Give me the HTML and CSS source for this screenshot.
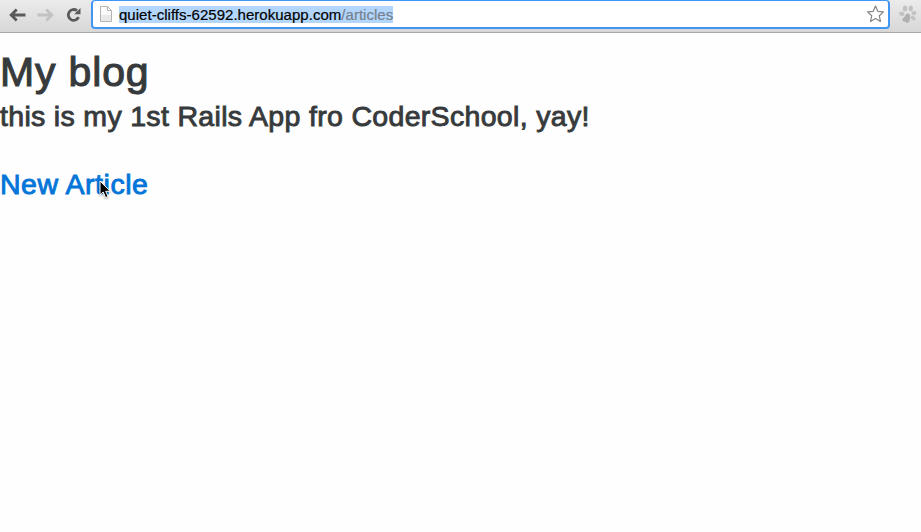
FILE: index.html
```html
<!DOCTYPE html>
<html lang="en">
<head>
<meta charset="utf-8">
<title>My blog</title>
<link rel="stylesheet" href="styles.css">
</head>
<body>
<header class="toolbar">
  <nav class="nav">
    <svg class="icon" width="18" height="16" viewBox="0 0 18 16"><path class="arrow" d="M16.5 8H3M7.7 2.6 2.2 8l5.500 5.400"/></svg>
    <svg class="icon disabled" width="18" height="16" viewBox="0 0 18 16"><path class="arrow" d="M.5 8H14M9.3 2.6 14.8 8l-5.500 5.400"/></svg>
    <svg class="icon" width="18" height="16" viewBox="0 0 18 16"><path class="reload" d="M13.6 10.2A5.4 5.4 0 1 1 12 3.6"/><path class="fill" d="M15.5 1v6.3H9.2z"/></svg>
  </nav>
  <div class="address">
    <svg class="page-icon" width="12" height="16" viewBox="0 0 12 16"><path class="sheet" d="M.5.5h7l4 4v11H.5z"/><path class="shade" d="M1 9h10v6H1z"/><path class="fold" d="M7.5.5v4h4"/></svg>
    <span class="url"><span class="url-text">quiet-cliffs-62592.herokuapp.com<span class="path">/articles</span></span></span>
    <svg class="star" width="19" height="18" viewBox="0 0 19 18"><path d="m10.500 1 2.300 5.300 5.700.6-4.200 3.900 1.200 5.700-5-3-5 3 1.200-5.700-4.200-3.900 5.700-.6z"/></svg>
  </div>
  <svg class="paw" width="18" height="19" viewBox="0 0 18 19">
    <ellipse cx="6.1" cy="3.4" rx="2.2" ry="2.9"/>
    <ellipse cx="11.8" cy="3.4" rx="2.1" ry="2.9"/>
    <ellipse cx="2.8" cy="8.8" rx="2.7" ry="2" transform="rotate(15 2.8 8.8)"/>
    <ellipse cx="15" cy="8.1" rx="2.5" ry="2" transform="rotate(-20 15 8.1)"/>
    <ellipse cx="14.2" cy="13.2" rx="2.7" ry="1.9" transform="rotate(25 14.2 13.2)"/>
    <path class="dark" d="M8.8 8.4c2 0 2.8 1.8 2.3 3.8-.4 1.8-.2 3-.8 4.4-.8 1.7-2.6 1.7-3.6.6-.7-.8-1.7-.6-2.7-1.300-1.300-1-.6-2.700.8-3.500 1.600-1 1.600-4 4-4z"/>
  </svg>
</header>
<main class="content">
  <h1 class="title"><span class="title-text">My blog</span></h1>
  <h3 class="subtitle"><span class="subtitle-text">this is my 1st Rails App fro CoderSchool, yay!</span></h3>
  <h3 class="action"><a class="link" href="#">New Article</a></h3>
</main>
<svg class="cursor" width="14" height="20" viewBox="0 0 14 20"><path d="M1 1v14l3.200-3 2.400 5.600 2.500-1.100-2.400-5.200h4.500z"/></svg>
</body>
</html>
```
FILE: styles.css
```css
* { box-sizing: border-box; }
body {
  margin: 0;
  min-height: 532px;
  background: #fefefe;
  color: #373a3c;
  font-family: "Liberation Sans", Arial, sans-serif;
  overflow: hidden;
}
.toolbar {
  display: flex;
  align-items: flex-start;
  height: 33px;
  background: linear-gradient(#ebebeb, #d7d7d7);
  border-bottom: 1px solid #a8a8a8;
}
.nav { display: flex; gap: 10px; width: 91px; padding: 7px 0 0 9px; }
.icon { display: block; flex: none; }
.arrow, .reload { fill: none; stroke: #5a5a5a; stroke-width: 2.8; }
.fill { fill: #5a5a5a; }
.disabled .arrow { stroke: #c2c2c2; }
.address {
  display: flex;
  align-items: center;
  width: 799px;
  height: 29px;
  padding: 0 4px 0 7px;
  background: #fff;
  border: 2px solid #4096f5;
  border-top-width: 1px;
  border-radius: 4px;
}
.page-icon { flex: none; margin-right: 7px; }
.sheet { fill: #fbfbfb; stroke: #b5b5b5; }
.shade { fill: #e9e9e9; }
.fold { fill: none; stroke: #b5b5b5; }
.url { flex: 1; font-size: 15px; line-height: 17px; color: #000; white-space: nowrap; }
.url-text { display: inline-block; background: #b3d6fd; letter-spacing: .025px; -webkit-text-stroke: .2px currentColor; }
.path { color: #75818e; }
.star { flex: none; fill: #fff; stroke: #858585; stroke-width: 1.2; stroke-linejoin: round; }
.paw { flex: none; margin: 5px 0 0 9px; fill: #c2c2c2; }
.dark { fill: #b0b0b0; }
.content { padding-top: 17px; }
.title, .subtitle, .action { margin: 0; font-weight: 400; white-space: nowrap; }
.title { font-size: 41px; line-height: 44px; letter-spacing: .85px; -webkit-text-stroke: 1.1px currentColor; }
.subtitle, .action { font-size: 28.5px; line-height: 31px; -webkit-text-stroke: .9px currentColor; }
.subtitle { margin-top: 7px; letter-spacing: .32px; }
.action { margin-top: 37px; letter-spacing: .54px; }
.link { color: #0275d8; text-decoration: none; }
.cursor {
  position: absolute;
  left: 99px;
  top: 180px;
  fill: #000;
  stroke: #fff;
  stroke-width: 1;
  filter: drop-shadow(0 1px 1px rgba(0, 0, 0, .35));
}
```
